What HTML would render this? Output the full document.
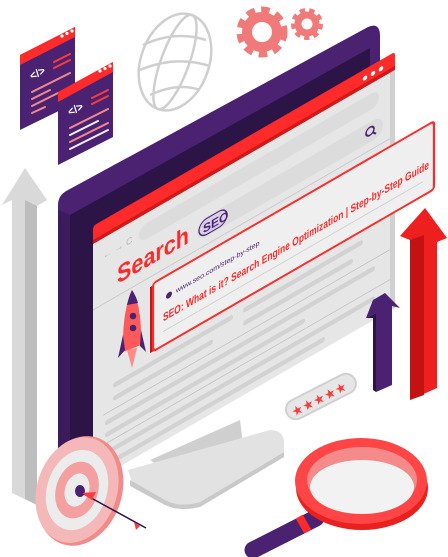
<!DOCTYPE html>
<html><head><meta charset="utf-8"><style>
html,body{margin:0;padding:0;background:#fff;width:448px;height:557px;overflow:hidden}
svg{display:block}
text{font-family:"Liberation Sans",sans-serif}
</style></head><body>
<svg width="448" height="557" viewBox="0 0 448 557" xmlns="http://www.w3.org/2000/svg">
<polygon points="12,200 2,205 25,168 47,200 37,206 37,505 12,493" fill="#d9d9d9"/>
<polygon points="25,200 37,206 37,505 25,499" fill="#bdbdbd"/>
<polygon points="410,240 400,236 425,208 447,238 437,242 437,388 410,400" fill="#ee1f1f"/>
<polygon points="410,240 424,235 424,395 410,400" fill="#c41212"/>
<g>
<polygon points="20,55 75,27 75,103 20,130" fill="#4b2172"/>
<polygon points="20,55 75,27 75,37 20,65" fill="#ff2b2b"/>
<circle cx="62" cy="36" r="1.6" fill="#fff"/><circle cx="67" cy="33.5" r="1.6" fill="#fff"/><circle cx="72" cy="31" r="1.6" fill="#fff"/>
<text x="32" y="80" font-size="11" font-weight="bold" fill="#fff" transform="rotate(-27 32 80)">&lt;/&gt;</text>
<g stroke-width="2" stroke-linecap="round">
<line x1="54" y1="62" x2="70" y2="54" stroke="#ff3b3b"/><line x1="54" y1="68" x2="70" y2="60" stroke="#ff3b3b"/>
<line x1="32" y1="92" x2="70" y2="73" stroke="#f28a8a"/><line x1="32" y1="99" x2="50" y2="90" stroke="#f28a8a"/>
<line x1="32" y1="106" x2="60" y2="92" stroke="#f28a8a"/><line x1="32" y1="113" x2="45" y2="107" stroke="#f28a8a"/>
</g>
</g>
<g>
<polygon points="58,92 113,62 113,137 58,165" fill="#4b2172"/>
<polygon points="58,92 113,62 113,72 58,102" fill="#ff2b2b"/>
<circle cx="100" cy="71" r="1.6" fill="#fff"/><circle cx="105" cy="68.5" r="1.6" fill="#fff"/><circle cx="110" cy="66" r="1.6" fill="#fff"/>
<text x="70" y="116" font-size="11" font-weight="bold" fill="#fff" transform="rotate(-27 70 116)">&lt;/&gt;</text>
<g stroke-width="2" stroke-linecap="round">
<line x1="92" y1="98" x2="108" y2="90" stroke="#ff3b3b"/><line x1="92" y1="104" x2="108" y2="96" stroke="#ff3b3b"/>
<line x1="70" y1="128" x2="108" y2="109" stroke="#f28a8a"/><line x1="70" y1="135" x2="98" y2="121" stroke="#eee"/>
<line x1="70" y1="142" x2="108" y2="123" stroke="#f28a8a"/><line x1="70" y1="149" x2="108" y2="130" stroke="#eee"/>
</g>
</g>
<g fill="none" stroke="#cfcfcf" stroke-width="2.5">
<ellipse cx="175" cy="62" rx="34" ry="50" transform="rotate(20 175 62)"/>
<ellipse cx="175" cy="62" rx="14" ry="50" transform="rotate(20 175 62)"/>
<path d="M143 45 Q175 30 206 40"/><path d="M140 70 Q175 55 210 66"/><path d="M150 95 Q178 82 200 90"/>
</g>
<g>
<circle cx="262" cy="32" r="21" fill="none" stroke="#f07a7a" stroke-width="9" stroke-dasharray="8 6"/>
<circle cx="262" cy="32" r="15" fill="none" stroke="#f07a7a" stroke-width="10"/>
<circle cx="307" cy="24" r="13" fill="none" stroke="#f07a7a" stroke-width="6" stroke-dasharray="5 4"/>
<circle cx="307" cy="24" r="9" fill="none" stroke="#f07a7a" stroke-width="7"/>
</g>
<path d="M58,205 Q58,195 68,190 L368,27 Q380,22 380,36 L380,300 L58,470 Z" fill="#4b2172"/>
<polygon points="70,215 370,48 370,300 70,462" fill="#2c1446"/>
<polygon points="58,210 70,215 70,462 58,470" fill="#3b1b5c"/>
<polygon points="150,460 240,420 245,460 200,490" fill="#cfcfcf"/>
<path d="M128,470 L270,430 Q285,430 284,445 L284,452 L200,502 Q180,508 165,500 L132,482 Z" fill="#e2e2e2"/>
<path d="M130,480 L165,500 Q180,508 200,502 L284,452 L284,457 L200,507 Q180,512 165,505 L130,486 Z" fill="#c9c9c9"/>
<g transform="translate(93,0) matrix(1,-0.577,0,1,0,0)">
<rect x="0" y="230" width="297" height="252" fill="#e6e6e6"/>
<rect x="297" y="230" width="5" height="252" fill="#d0d0d0"/>
<rect x="0" y="226" width="302" height="18" rx="3" fill="#ff2b2b"/>
<rect x="0" y="240" width="302" height="4" fill="#d21818"/>
<circle cx="272" cy="235" r="2.2" fill="#fff"/><circle cx="280" cy="235" r="2.2" fill="#fff"/><circle cx="288" cy="235" r="2.2" fill="#fff"/>
<text x="10" y="265" font-size="9" fill="#b5b5b5">← → C</text>
<rect x="46" y="254" width="240" height="16" rx="8" fill="#dcdcdc"/>
<text x="24" y="298" font-size="25" font-weight="bold" fill="#ff2b2b" textLength="72" lengthAdjust="spacingAndGlyphs">Search</text>
<rect x="104" y="282" width="186" height="20" rx="10" fill="#dcdcdc"/>
<rect x="106" y="284" width="28" height="16" rx="8" fill="#d8d0e6" stroke="#4b2172" stroke-width="1.2"/>
<text x="110" y="297" font-size="12" font-weight="bold" fill="#4b2172">SEO</text>
<circle cx="277" cy="291" r="4" fill="none" stroke="#4b2172" stroke-width="1.6"/>
<line x1="280" y1="294" x2="283" y2="297" stroke="#4b2172" stroke-width="1.6"/>
<line x1="0" y1="310" x2="297" y2="310" stroke="#c8c8c8" stroke-width="1"/>
<g fill="#d2d2d2">
<rect x="20" y="395" width="120" height="5" rx="2.5"/><rect x="150" y="395" width="120" height="5" rx="2.5"/>
<rect x="20" y="408" width="100" height="5" rx="2.5"/><rect x="150" y="408" width="110" height="5" rx="2.5"/>
<rect x="12" y="428" width="270" height="5" rx="2.5"/><rect x="12" y="440" width="200" height="5" rx="2.5"/>
<rect x="12" y="458" width="270" height="5" rx="2.5"/><rect x="12" y="470" width="220" height="5" rx="2.5"/>
</g>
<line x1="10" y1="421" x2="297" y2="421" stroke="#bbb" stroke-width="0.8"/>
<line x1="10" y1="451" x2="297" y2="451" stroke="#bbb" stroke-width="0.8"/>
<rect x="57" y="320" width="5" height="66" fill="#c81414"/>
<rect x="60" y="318" width="281" height="68" rx="3" fill="#efefef" stroke="#ff2b2b" stroke-width="2.2"/>
<circle cx="76" cy="339" r="3" fill="#4b2172"/>
<text x="83" y="341" font-size="7" fill="#4b2172">www.seo.com/step-by-step</text>
<text x="70" y="362" font-size="11.5" font-weight="bold" fill="#ff2b2b" textLength="266" lengthAdjust="spacingAndGlyphs">SEO: What is it? Search Engine Optimization | Step-by-Step Guide</text>
<line x1="70" y1="372" x2="330" y2="372" stroke="#cfcfcf" stroke-width="1"/>
</g>
<g>
<path d="M132,290 Q142,305 141,345 L123,352 Q122,312 132,290 Z" fill="#ff5a5a"/>
<path d="M132,290 Q136,296 138,303 L127,305 Q129,296 132,290Z" fill="#4b2172"/>
<circle cx="133" cy="316" r="3.3" fill="#4b2172"/><circle cx="133" cy="328" r="3.3" fill="#4b2172"/>
<path d="M123,335 L118,358 L125,350 Z" fill="#4b2172"/><path d="M141,330 L146,352 L140,346 Z" fill="#4b2172"/>
<path d="M127,350 L137,348 L132,368 Z" fill="#ff8a8a"/>
</g>
<polygon points="373,300 366,318 376,313 376,392 392,385 392,306 400,308 385,293" fill="#4b2172"/>
<polygon points="366,318 376,313 376,392 373,390 373,318" fill="#2c1446"/>
<g transform="rotate(-27 320 397)">
<rect x="283" y="387" width="76" height="20" rx="10" fill="#e6e6e6" stroke="#d0d0d0" stroke-width="2"/>
<text x="288" y="403" font-size="13" fill="#ff3b3b" letter-spacing="0.5">★★★★★</text>
</g>
<g transform="rotate(18 77 490)">
<ellipse cx="80" cy="490" rx="42" ry="56" fill="#f28a8a"/>
<ellipse cx="77" cy="490" rx="40" ry="54" fill="#f5b8b8"/>
<ellipse cx="77" cy="490" rx="30" ry="41" fill="#ececec"/>
<ellipse cx="77" cy="490" rx="21" ry="29" fill="#f5a0a0"/>
<ellipse cx="77" cy="490" rx="12" ry="17" fill="#ececec"/>
</g>
<ellipse cx="80" cy="491" rx="5" ry="6" fill="#4b2172"/>
<line x1="82" y1="493" x2="146" y2="528" stroke="#2c1446" stroke-width="1.5"/>
<polygon points="82,493 96,492 92,500" fill="#ff3b3b"/>
<path d="M134,522 L140,526 L136,530 Z" fill="#ff3b3b"/>
<line x1="316" y1="518" x2="253" y2="550" stroke="#4b2172" stroke-width="17" stroke-linecap="round"/>
<line x1="300" y1="526" x2="307" y2="522" stroke="#ff2b2b" stroke-width="17"/>
<ellipse cx="362" cy="488" rx="66" ry="42" fill="#e82020"/>
<ellipse cx="361" cy="481" rx="66" ry="43" fill="#ff4545"/>
<ellipse cx="362" cy="480" rx="55" ry="33" fill="#f48a8a"/>
<ellipse cx="362" cy="487" rx="52" ry="27" fill="#f2f2f2"/>
</svg>
</body></html>
